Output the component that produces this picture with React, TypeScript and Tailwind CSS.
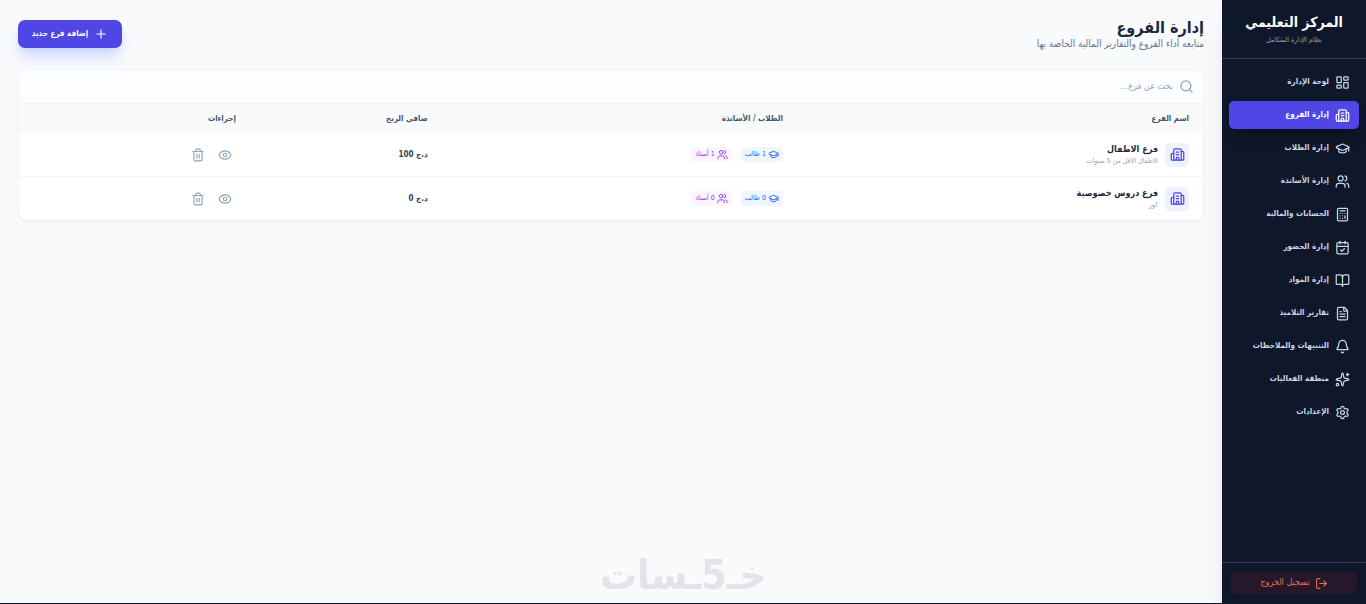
import React from "react";
import {
  Bell, BookOpen, Building2, Calculator, CalendarCheck, Eye, FileText, GraduationCap,
  LayoutDashboard, LogOut, Plus, Search, Settings, Sparkles, Trash2, Users,
  type LucideIcon,
} from "lucide-react";

const navItems: { label: string; icon: LucideIcon; active?: boolean }[] = [
  { label: "لوحة الإدارة", icon: LayoutDashboard },
  { label: "إدارة الفروع", icon: Building2, active: true },
  { label: "إدارة الطلاب", icon: GraduationCap },
  { label: "إدارة الأساتذة", icon: Users },
  { label: "الحسابات والمالية", icon: Calculator },
  { label: "إدارة الحضور", icon: CalendarCheck },
  { label: "إدارة المواد", icon: BookOpen },
  { label: "تقارير التلاميذ", icon: FileText },
  { label: "التنبيهات والملاحظات", icon: Bell },
  { label: "منطقة الفعاليات", icon: Sparkles },
  { label: "الإعدادات", icon: Settings },
];

const branches = [
  { name: "فرع الاطفال", note: "الاطفال الاقل من 5 سنوات", students: 1, teachers: 1, profit: 100 },
  { name: "فرع دروس خصوصية", note: "كور", students: 0, teachers: 0, profit: 0 },
];

function Sidebar() {
  return (
    <aside className="sticky top-0 flex h-screen w-36 shrink-0 flex-col bg-[#0f172a] shadow-xl">
      <div className="flex h-[59px] flex-col items-center border-b border-[#334155] pt-3">
        <p className="text-[14px] leading-5 font-bold whitespace-nowrap text-white">المركز التعليمي</p>
        <p className="text-[7px] leading-4 whitespace-nowrap text-[#94a3b8]">نظام الإدارة المتكامل</p>
      </div>
      <nav className="flex flex-1 flex-col gap-[5px] px-[7px] pt-[9px]">
        {navItems.map(({ label, icon: Icon, active }) => (
          <a
            key={label}
            href="#"
            className={
              active
                ? "flex h-7 shrink-0 items-center gap-[6px] rounded-[5px] bg-[#4f46e5] px-[9px] text-white shadow-lg shadow-black/20"
                : "flex h-7 shrink-0 items-center gap-[6px] rounded-[5px] px-[9px] text-[#cbd5e1]"
            }
          >
            <Icon size={15} className="shrink-0" />
            <span className="text-[8px] font-bold whitespace-nowrap">{label}</span>
          </a>
        ))}
      </nav>
      <div className="border-t border-[#334155] px-[9px] pt-[9px] pb-[10px]">
        <button type="button" className="flex h-[22px] w-full items-center justify-center gap-[5px] rounded-[5px] bg-[#26182a] text-[9px] font-medium text-[#e0704f]">
          <LogOut size={13} />
          تسجيل الخروج
        </button>
      </div>
    </aside>
  );
}

function BranchTable() {
  return (
    <section className="overflow-hidden rounded-[9px] border border-[#f1f5f9] bg-white shadow-xs">
      <label className="flex h-[34px] items-center gap-[6px] border-b border-[#f1f5f9] bg-[#fcfdfe] px-[9px]">
        <Search size={15} className="shrink-0 text-[#94a3b8]" />
        <input
          type="text"
          aria-label="بحث عن فرع"
          placeholder="بحث عن فرع..."
          className="min-w-0 flex-1 bg-transparent text-[9px] outline-none placeholder:text-[#94a3b8]"
        />
      </label>
      <table className="w-full table-fixed border-separate border-spacing-0 text-right">
        <colgroup>
          <col className="w-[34.3%]" />
          <col className="w-[30%]" />
          <col className="w-[16.2%]" />
          <col />
        </colgroup>
        <thead className="bg-[#f8fafc] text-[8px] text-[#475569]">
          <tr className="h-[29px]">
            <th className="px-[14px] font-bold">اسم الفرع</th>
            <th className="px-[14px] font-bold">الطلاب / الأساتذة</th>
            <th className="px-[14px] font-bold">صافي الربح</th>
            <th className="px-[14px] font-bold">إجراءات</th>
          </tr>
        </thead>
        <tbody className="[&>tr:first-child>td]:border-b [&>tr>td]:border-[#f1f5f9]">
          {branches.map((b) => (
            <tr key={b.name} className="h-[43px] first:h-11">
              <td className="px-[14px]">
                <div className="flex items-center gap-[7px]">
                  <span className="flex size-6 shrink-0 items-center justify-center rounded-[5px] bg-[#eef2ff] text-[#4f46e5]">
                    <Building2 size={15} />
                  </span>
                  <div>
                    <p className="text-[9px] leading-3 font-bold text-[#1e293b]">{b.name}</p>
                    <p className="text-[7px] leading-3 text-[#94a3b8]">{b.note}</p>
                  </div>
                </div>
              </td>
              <td className="px-[14px]">
                <div className="flex gap-[9px] text-[7px]">
                  <span className="flex h-[15px] items-center gap-[2px] rounded-[3px] bg-[#eff6ff] px-[4px] text-[#2563eb]">
                    <GraduationCap size={11} />
                    {b.students} طالب
                  </span>
                  <span className="flex h-[15px] items-center gap-[2px] rounded-[3px] bg-[#faf5ff] px-[4px] text-[#9333ea]">
                    <Users size={11} />
                    {b.teachers} أستاذ
                  </span>
                </div>
              </td>
              <td className="px-[14px] text-[8px] font-bold text-[#334155]">د.ج {b.profit}</td>
              <td className="px-[14px]">
                <div className="flex gap-[5px] text-[#94a3b8]">
                  <button type="button" aria-label="عرض" className="flex size-[22px] items-center justify-center">
                    <Eye size={14} />
                  </button>
                  <button type="button" aria-label="حذف" className="flex size-[22px] items-center justify-center">
                    <Trash2 size={14} />
                  </button>
                </div>
              </td>
            </tr>
          ))}
        </tbody>
      </table>
    </section>
  );
}

export default function App() {
  return (
    <div dir="rtl" className="flex min-h-screen bg-[#f8fafc] font-['DejaVu_Sans_Condensed','DejaVu_Sans',sans-serif] text-[#1e293b]">
      <Sidebar />
      <main className="min-w-0 flex-1 px-[18px] pt-[18px]">
        <header className="mb-[17px] flex h-[34px] items-start justify-between">
          <div>
            <h1 className="text-[16px] leading-5 font-bold whitespace-nowrap">إدارة الفروع</h1>
            <p className="text-[10px] leading-3 whitespace-nowrap text-[#64748b]">متابعة أداء الفروع والتقارير المالية الخاصة بها</p>
          </div>
          <button type="button" className="mt-[2px] flex h-7 w-[104px] items-center justify-center gap-[6px] rounded-[7px] bg-[#4f46e5] text-[8px] font-bold text-white shadow-lg shadow-[#c7d2fe]">
            <Plus size={14} />
            إضافة فرع جديد
          </button>
        </header>
        <BranchTable />
      </main>
      <div className="pointer-events-none fixed inset-x-0 bottom-0 flex h-14 items-center justify-center border-b border-[#0f172a]">
        <span className="text-[41px] leading-none font-bold text-[#e2e4e7]">خـ5ـسات</span>
      </div>
    </div>
  );
}
